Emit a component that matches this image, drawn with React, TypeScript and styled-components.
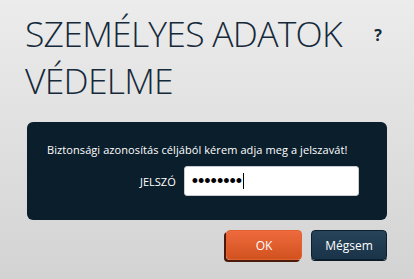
import React from "react";
import styled, { createGlobalStyle } from "styled-components";

const Global = createGlobalStyle`
  html, body { margin: 0; padding: 0; }
  body {
    width: 414px;
    height: 279px;
    overflow: hidden;
    background: linear-gradient(180deg, #ececec 0%, #d3d3d3 100%);
    font-family: "Open Sans", "Liberation Sans", sans-serif;
  }
`;

const Page = styled.div`
  display: flex;
  flex-direction: column;
  padding: 10px 27px 0 27px;
  width: 360px;
`;

const Header = styled.div`
  display: flex;
  justify-content: space-between;
  align-items: flex-start;
`;

const Title = styled.h1`
  margin: 0 0 0 -2px;
  font-family: "Open Sans", sans-serif;
  font-weight: 300;
  font-size: 35.5px;
  line-height: 47px;
  color: #14293a;
  letter-spacing: -0.75px;
`;

const Help = styled.span`
  margin-top: 14px;
  margin-right: 5px;
  font-family: "Open Sans", sans-serif;
  font-weight: 700;
  font-size: 16px;
  color: #14293a;
`;

const Panel = styled.div`
  margin-top: 18px;
  height: 98px;
  box-sizing: border-box;
  background: #0b1e2c;
  border-radius: 6px;
  padding: 20px 0 0 20px;
  display: flex;
  flex-direction: column;
  gap: 9px;
`;

const Message = styled.p`
  margin: 0;
  font-family: "Open Sans", sans-serif;
  font-size: 11px;
  letter-spacing: 0.08px;
  color: #ffffff;
`;

const FieldRow = styled.div`
  display: flex;
  align-items: center;
  gap: 8px;
  padding-left: 93px;
`;

const Label = styled.label`
  font-family: "Open Sans", sans-serif;
  font-size: 11px;
  color: #ffffff;
`;

const Input = styled.div`
  width: 175px;
  height: 30px;
  box-sizing: border-box;
  background: #ffffff;
  border-radius: 3px;
  border: 1px solid #c8ccd0;
  display: flex;
  align-items: center;
  padding-left: 7px;
  color: #000;
`;

const Dots = styled.span`
  font-family: "Liberation Sans", Arial, sans-serif;
  font-size: 18px;
  line-height: 1;
  letter-spacing: 0;
`;

const Caret = styled.span`
  display: inline-block;
  width: 1px;
  height: 16px;
  background: #000;
  margin-left: 1px;
`;

const Buttons = styled.div`
  display: flex;
  justify-content: flex-end;
  gap: 9px;
  margin-top: 10px;
`;

const Button = styled.button<{ $variant: "ok" | "cancel" }>`
  width: 76px;
  height: 30px;
  border-radius: 4px;
  font-family: "Open Sans", sans-serif;
  font-size: 12px;
  color: #ffffff;
  cursor: pointer;
  padding: 0;
  ${(p) =>
    p.$variant === "ok"
      ? `
    background: linear-gradient(180deg, #ee6a3e 0%, #d2521f 100%);
    border: 1px solid #e0602f;
    box-shadow: -2px 2px 0 #4a1a0a;
  `
      : `
    background: linear-gradient(180deg, #26445a 0%, #1a3348 100%);
    border: 1px solid #0c1f2e;
    box-shadow: 0 1px 0 #0a1a26;
  `}
`;

export default function App() {
  return (
    <>
      <Global />
      <Page>
        <Header>
          <Title>
            SZEMÉLYES ADATOK
            <br />
            VÉDELME
          </Title>
          <Help>?</Help>
        </Header>
        <Panel>
          <Message>Biztonsági azonosítás céljából kérem adja meg a jelszavát!</Message>
          <FieldRow>
            <Label>JELSZÓ</Label>
            <Input>
              <Dots>••••••••</Dots>
              <Caret />
            </Input>
          </FieldRow>
        </Panel>
        <Buttons>
          <Button $variant="ok">OK</Button>
          <Button $variant="cancel">Mégsem</Button>
        </Buttons>
      </Page>
    </>
  );
}
